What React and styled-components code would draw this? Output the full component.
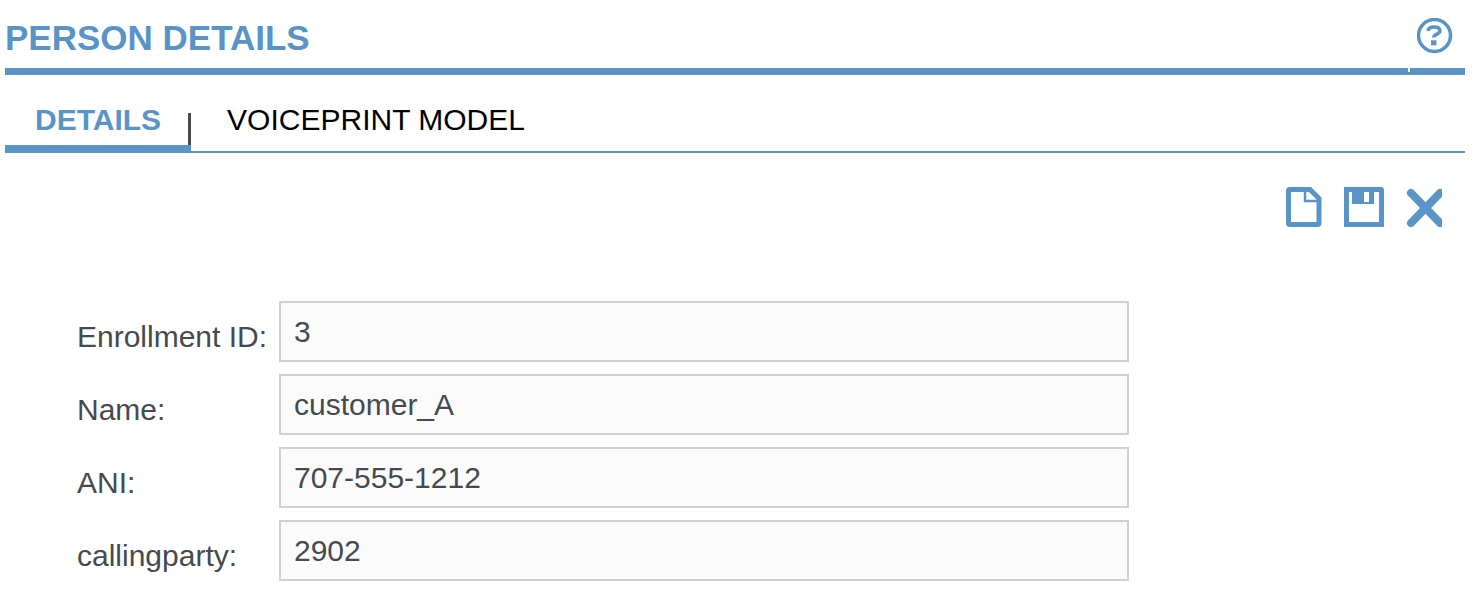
import React, { useState } from 'react'
import styled, { createGlobalStyle } from 'styled-components'

const initialPerson = {
  enrollmentId: '3',
  name: 'customer_A',
  ani: '707-555-1212',
  callingparty: '2902',
}

const fields = [
  { key: 'enrollmentId', label: 'Enrollment ID:' },
  { key: 'name', label: 'Name:' },
  { key: 'ani', label: 'ANI:' },
  { key: 'callingparty', label: 'callingparty:' },
]

const HelpIcon = () => (
  <svg width="36" height="36" viewBox="0 0 36 36" fill="none" stroke="#5a94c6">
    <circle cx="17.5" cy="17.5" r="16" strokeWidth="3.5" />
    <path
      d="M11 13c.3-2.600 2.700-4 6-4 3.700 0 6 1.500 6 4 0 3.200-6.300 3-6.300 6.500"
      strokeWidth="3.5"
    />
    <path d="M14 24.800h5.500" strokeWidth="5" />
  </svg>
)

const NewIcon = () => (
  <svg width="36" height="40" viewBox="0 0 36 40" fill="none" stroke="#5a94c6">
    <path
      d="M4 2.500h20L33 11.500V36q0 1.500-1.500 1.500H4q-1.500 0-1.500-1.500V4q0-1.500 1.500-1.500z"
      strokeWidth="5"
    />
    <path d="M19 4v10h13" strokeWidth="2.5" />
  </svg>
)

const SaveIcon = () => (
  <svg width="40" height="40" viewBox="0 0 40 40">
    <path
      d="M0 0h38l2 2v38H0zM5 5v30h30V5h-5v12H8V5zM20 5v10h5V5z"
      fill="#5a94c6"
      fillRule="evenodd"
    />
  </svg>
)

const CloseIcon = () => (
  <svg width="36" height="40" viewBox="0 0 36 40" fill="none" stroke="#5a94c6">
    <path d="M5 6l29 30M34 6L5 36" strokeWidth="8" strokeLinecap="round" />
  </svg>
)

const App = () => {
  const [person, setPerson] = useState(initialPerson)
  const [tab, setTab] = useState('details')

  return (
    <Page>
      <GlobalStyle />
      <Header>
        <TitleCell>
          <Title>PERSON DETAILS</Title>
        </TitleCell>
        <HelpCell>
          <IconButton aria-label="Help">
            <HelpIcon />
          </IconButton>
        </HelpCell>
      </Header>
      <Tabs>
        <Tab $active={tab === 'details'} onClick={() => setTab('details')}>
          DETAILS
        </Tab>
        <Divider />
        <Tab $active={tab === 'model'} onClick={() => setTab('model')}>
          VOICEPRINT MODEL
        </Tab>
      </Tabs>
      <Toolbar>
        <IconButton aria-label="New">
          <NewIcon />
        </IconButton>
        <IconButton aria-label="Save">
          <SaveIcon />
        </IconButton>
        <IconButton aria-label="Delete">
          <CloseIcon />
        </IconButton>
      </Toolbar>
      <Form onSubmit={e => e.preventDefault()}>
        {fields.map(({ key, label }) => (
          <Field key={key}>
            <Label htmlFor={key}>{label}</Label>
            <Input
              id={key}
              value={person[key]}
              onChange={e => setPerson({ ...person, [key]: e.target.value })}
            />
          </Field>
        ))}
      </Form>
    </Page>
  )
}

export default App

const GlobalStyle = createGlobalStyle`
  * {
    box-sizing: border-box;
  }

  body {
    margin: 0;
    background: #fff;
    color: #464a4d;
    font-family: 'Liberation Sans', Arial, sans-serif;
    font-size: 30px;
  }
`

const Page = styled.main`
  padding: 0 11px 28px 5px;
`

const Header = styled.header`
  display: flex;
  gap: 2px;
  border-bottom: 3px solid #5a94c6;
`

const HeaderCell = styled.div`
  display: flex;
  align-items: center;
  height: 72px;
  border-bottom: 4px solid #5a94c6;
`

const TitleCell = styled(HeaderCell)`
  flex: 1;
  padding-top: 8px;
`

const HelpCell = styled(HeaderCell)`
  justify-content: center;
  width: 55px;
  padding: 4px 6px 0 0;
`

const Title = styled.h1`
  margin: 0;
  font-size: 35px;
  line-height: 40px;
  color: #5a94c6;
`

const Button = styled.button`
  margin: 0;
  padding: 0;
  border: 0;
  background: none;
  font: inherit;
  color: inherit;
  cursor: pointer;
`

const IconButton = styled(Button)`
  display: flex;
`

const Tabs = styled.nav`
  display: flex;
  align-items: flex-end;
  height: 78px;
  border-bottom: 2px solid #5a94c6;
`

const Tab = styled(Button)`
  height: 60px;
  padding: 3px 27px 0 30px;
  border-bottom: 6px solid
    ${props => (props.$active ? '#5a94c6' : 'transparent')};
  color: ${props => (props.$active ? '#5a94c6' : '#000')};
  font-weight: ${props => (props.$active ? 'bold' : 'normal')};
`

const Divider = styled.span`
  width: 3px;
  height: 38px;
  margin-right: 6px;
  background: #464a4d;
  border-bottom: 6px solid #5a94c6;
`

const Toolbar = styled.div`
  display: flex;
  justify-content: flex-end;
  gap: 22px;
  padding: 34px 23px 0 0;
`

const Form = styled.form`
  display: grid;
  gap: 12px;
  padding: 74px 0 0 72px;
`

const Field = styled.div`
  display: grid;
  grid-template-columns: 202px minmax(0, 850px);
  align-items: center;
`

const Label = styled.label`
  padding-top: 10px;
  line-height: 36px;
`

const Input = styled.input`
  width: 100%;
  height: 61px;
  padding: 0 13px;
  border: 2px solid #d0d0d0;
  border-radius: 0;
  background: #fbfbfb;
  color: inherit;
  font: inherit;
`
